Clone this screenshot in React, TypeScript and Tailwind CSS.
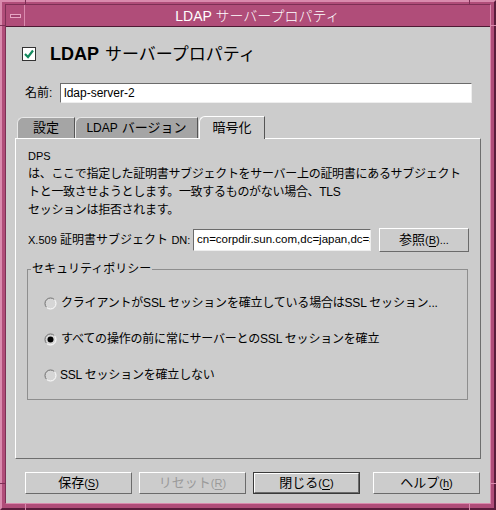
import React from "react";

const font = "font-['Liberation_Sans','Noto_Sans_CJK_JP',sans-serif]";

const Radio = ({ checked }: { checked?: boolean }) => (
    <svg width="13" height="13" viewBox="0 0 13 13" className="shrink-0">
        <circle cx="6.5" cy="6.5" r="5.5" fill="#d6d6d6" />
        <path d="M2.6 10.4 A5.5 5.5 0 0 1 10.4 2.6" fill="none" stroke="#6e6e6e" strokeWidth="1" />
        <path d="M10.4 2.6 A5.5 5.5 0 0 1 2.6 10.4" fill="none" stroke="#ffffff" strokeWidth="1" />
        {checked && <circle cx="6.5" cy="6.5" r="3" fill="#000" />}
    </svg>
);

const Button = ({ label, mn, disabled, def }: { label: string; mn: string; disabled?: boolean; def?: boolean }) => (
    <div className={`h-[22px] w-[107px] ${def ? "border border-[#3a3a3a]" : ""}`}>
        <div
            className={`flex h-full w-full items-center justify-center border-t border-l border-t-white border-l-white border-r border-b border-r-[#6b6b6b] border-b-[#6b6b6b] bg-[#cccccc] text-[13px] ${
                disabled ? "text-[#9a9a9a]" : "text-black"
            }`}
        >
            <span>{label}</span>
            <span className="text-[11px]">
                (<span className="underline underline-offset-2">{mn}</span>)
            </span>
        </div>
    </div>
);

export default function App() {
    return (
        <div className={`relative h-[510px] w-[496px] ${font}`}>
            {/* window frame */}
            <div className="flex h-full w-full flex-col border-t-2 border-l-2 border-t-[#d98aad] border-l-[#d98aad] border-r-2 border-b-2 border-r-[#5a1d3c] border-b-[#5a1d3c] bg-[#b04d79] pt-[2px] pl-[3px] pr-[3px] pb-[4px]">
                <div className="flex flex-1 flex-col border-t border-l border-t-[#7d2f55] border-l-[#7d2f55] border-r border-b border-r-[#d98aad] border-b-[#d98aad]">
                    {/* title bar */}
                    <div className="flex h-[22px] shrink-0 border-b border-b-[#4e1934] bg-[#b04d79]">
                        <div className="flex w-[19px] items-center justify-center border-r border-r-[#d98aad]">
                            <div className="h-[4px] w-[11px] border border-[#e7a6c3] bg-[#a24370]" />
                        </div>
                        <div className="flex flex-1 items-center justify-center text-[14px] font-light leading-none text-white">
                            LDAP サーバープロパティ
                        </div>
                    </div>

                    {/* dialog body */}
                    <div className="flex flex-1 flex-col bg-[#cccccc]">
                        {/* heading */}
                        <div className="mt-[17px] flex h-[20px] items-center gap-[14px] pl-[16px]">
                            <svg width="14" height="14" viewBox="0 0 14 14">
                                <rect x="0.5" y="0.5" width="13" height="13" fill="#fff" stroke="#333" />
                                <path d="M3 7 L6 10 L11 3.5" fill="none" stroke="#138a5e" strokeWidth="2.2" />
                            </svg>
                            <div className="flex items-baseline whitespace-nowrap text-black">
                                <span className="text-[18px] font-bold">LDAP</span>
                                <span className="ml-[6px] text-[17px]">サーバープロパティ</span>
                            </div>
                        </div>

                        {/* name */}
                        <div className="mt-[19px] ml-[19px] flex items-center">
                            <span className="w-[35px] text-[12px]">名前:</span>
                            <div className="flex h-[20px] w-[412px] items-center border-t border-l border-t-[#6b6b6b] border-l-[#6b6b6b] border-r border-b border-r-[#eeeeee] border-b-[#eeeeee] bg-white pl-[3px] text-[12px]">
                                ldap-server-2
                            </div>
                        </div>

                        {/* tabs */}
                        <div className="mt-[14px] ml-[11px] flex h-[21px] items-end">
                            <div className="flex h-[21px] w-[58px] items-center justify-center rounded-tl-[6px] border-t border-l border-t-[#e8e8e8] border-l-[#e8e8e8] border-r border-r-[#555] bg-[#a5a5a5] text-[13px]">
                                設定
                            </div>
                            <div className="flex h-[21px] w-[123px] items-center justify-center rounded-tl-[6px] border-t border-l border-t-[#e8e8e8] border-l-[#e8e8e8] border-r border-r-[#555] bg-[#a5a5a5] text-[13px]">
                                <span className="text-[12px]">LDAP</span>
                                <span className="ml-[4px]">バージョン</span>
                            </div>
                            <div className="relative z-10 -mb-px ml-[1px] flex h-[23px] w-[66px] items-center justify-center rounded-tl-[6px] border-t border-l border-t-white border-l-white border-r border-r-[#555] bg-[#cccccc] text-[13px]">
                                暗号化
                            </div>
                        </div>

                        {/* tab panel */}
                        <div className="ml-[9px] flex h-[321px] w-[466px] flex-col border-t border-l border-t-white border-l-white border-r border-b border-r-[#6e6e6e] border-b-[#6e6e6e] pl-[12px] pt-[8px]">
                            <div className="text-[12px] leading-[18px] tracking-[-0.3px] whitespace-nowrap">
                                <div className="text-[11px] tracking-normal">DPS</div>
                                <div>は、ここで指定した証明書サブジェクトをサーバー上の証明書にあるサブジェクト</div>
                                <div>トと一致させようとします。一致するものがない場合、TLS</div>
                                <div>セッションは拒否されます。</div>
                            </div>

                            <div className="mt-[9px] flex h-[24px] items-center">
                                <div className="w-[165px] whitespace-nowrap text-[12px]">
                                    <span className="text-[11px]">X.509</span> 証明書サブジェクト <span className="text-[11px]">DN:</span>
                                </div>
                                <div className="flex h-[22px] w-[178px] items-center overflow-hidden whitespace-nowrap border-t border-l border-t-[#6b6b6b] border-l-[#6b6b6b] border-r border-b border-r-[#eeeeee] border-b-[#eeeeee] bg-white pl-[3px] text-[11.5px]">
                                    cn=corpdir.sun.com,dc=japan,dc=s
                                </div>
                                <div className="ml-[8px] flex h-[24px] w-[90px] items-center justify-center border-t border-l border-t-white border-l-white border-r border-b border-r-[#6b6b6b] border-b-[#6b6b6b] text-[13px]">
                                    参照<span className="text-[11px]">(<span className="underline underline-offset-2">B</span>)...</span>
                                </div>
                            </div>

                            <fieldset className="mt-[8px] -ml-px w-[441px] border border-[#8e8e8e] pb-[14px]">
                                <legend className="ml-[3px] px-px text-[12px] leading-[18px]">セキュリティポリシー</legend>
                                <div className="mt-[15px] flex flex-col gap-[16px] pl-[16px] text-[12px] tracking-[-0.2px] whitespace-nowrap">
                                    <div className="flex h-[20px] items-center gap-[4px]">
                                        <Radio />
                                        <span>クライアントがSSL セッションを確立している場合はSSL セッション...</span>
                                    </div>
                                    <div className="flex h-[20px] items-center gap-[4px]">
                                        <Radio checked />
                                        <span>すべての操作の前に常にサーバーとのSSL セッションを確立</span>
                                    </div>
                                    <div className="flex h-[20px] items-center gap-[3px]">
                                        <Radio />
                                        <span>SSL セッションを確立しない</span>
                                    </div>
                                </div>
                            </fieldset>
                        </div>

                        {/* buttons */}
                        <div className="mt-[13px] ml-[19px] flex">
                            <Button label="保存" mn="S" />
                            <div className="ml-[7px]">
                                <Button label="リセット" mn="R" disabled />
                            </div>
                            <div className="ml-[7px]">
                                <Button label="閉じる" mn="C" def />
                            </div>
                            <div className="ml-[13px]">
                                <Button label="ヘルプ" mn="h" />
                            </div>
                        </div>
                    </div>
                </div>
            </div>

            {/* frame resize notches */}
            <span className="pointer-events-none absolute top-0 left-[25px] h-[5px] w-px bg-[#7d2f55]" />
            <span className="pointer-events-none absolute top-0 left-[469px] h-[5px] w-px bg-[#7d2f55]" />
            <span className="pointer-events-none absolute bottom-0 left-[25px] h-[6px] w-px bg-[#d98aad]" />
            <span className="pointer-events-none absolute bottom-0 left-[469px] h-[6px] w-px bg-[#d98aad]" />
            <span className="pointer-events-none absolute top-[25px] left-0 h-px w-[5px] bg-[#7d2f55]" />
            <span className="pointer-events-none absolute top-[483px] left-0 h-px w-[5px] bg-[#7d2f55]" />
            <span className="pointer-events-none absolute top-[25px] right-0 h-px w-[6px] bg-[#d98aad]" />
            <span className="pointer-events-none absolute top-[483px] right-0 h-px w-[6px] bg-[#d98aad]" />
        </div>
    );
}
